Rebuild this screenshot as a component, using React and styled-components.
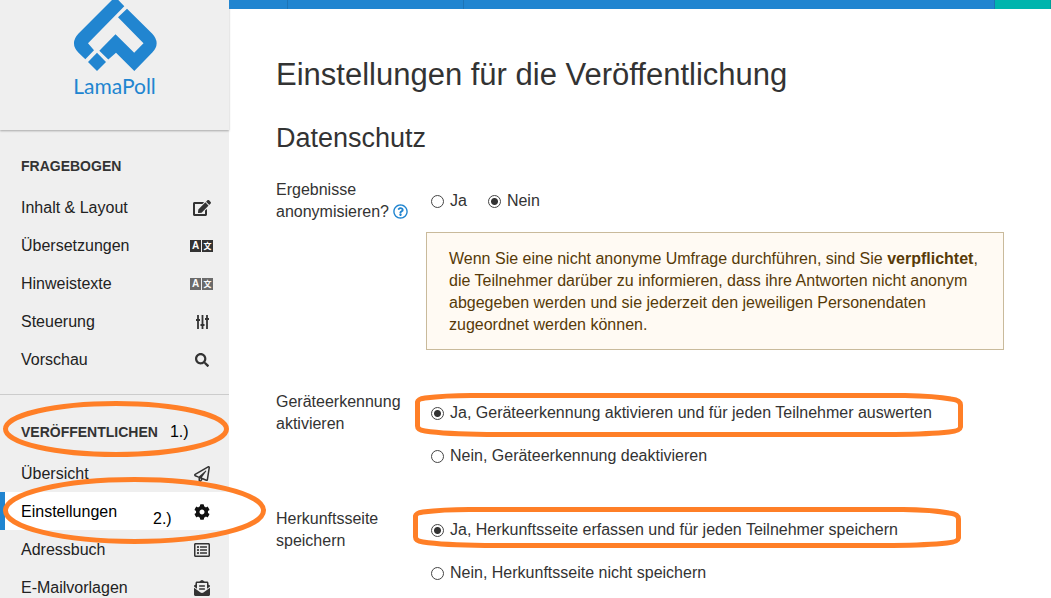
import React, { useState } from 'react';
import styled, { createGlobalStyle } from 'styled-components';
import {
  FaEdit,
  FaSearch,
  FaCog,
  FaRegPaperPlane,
  FaRegListAlt,
  FaEnvelopeOpenText,
  FaRegQuestionCircle,
} from 'react-icons/fa';

const GlobalStyle = createGlobalStyle`
  * {
    box-sizing: border-box;
  }

  html {
    scrollbar-width: none;
  }

  body {
    margin: 0;
    background: #fff;
    color: #333;
    font-family: "Liberation Sans", Arial, sans-serif;
    font-size: 16px;
    line-height: 22px;
  }
`;

const Page = styled.div`
  display: flex;
  min-height: 100vh;
`;

const Sidebar = styled.aside`
  position: relative;
  z-index: 1;
  flex: 0 0 229px;
  background: #efefef;
`;

const Brand = styled.a`
  display: flex;
  flex-direction: column;
  align-items: center;
  height: 130px;
  background: #efefef;
  box-shadow: 0 1px 2px rgba(0, 0, 0, 0.3);
  color: #2185d0;
  font-family: Lato, sans-serif;
  font-size: 21px;
  line-height: 30px;
  text-decoration: none;
`;

const MenuSection = styled.section`
  padding: 24px 0 16px;

  & + & {
    padding-top: 25px;
    border-top: 1px solid #ccc;
  }
`;

const MenuHeading = styled.h2`
  position: relative;
  display: flex;
  gap: 12px;
  margin: 0 0 10px;
  padding-left: 21px;
  font-size: 14px;
  line-height: 24px;
`;

const MenuList = styled.ul`
  margin: 0;
  padding: 0;
  list-style: none;
`;

const MenuItem = styled.li`
  position: relative;
`;

const MenuLink = styled.a`
  display: flex;
  align-items: center;
  justify-content: space-between;
  height: 38px;
  padding: 1px 15px 0 ${({ $active }) => ($active ? '16px' : '21px')};
  border-left: ${({ $active }) => ($active ? '5px solid #2185d0' : 'none')};
  background: ${({ $active }) => ($active ? '#fff' : 'transparent')};
  color: ${({ $active }) => ($active ? '#000' : '#222')};
  text-decoration: none;
`;

const MenuIcon = styled.span`
  display: flex;
  justify-content: center;
  width: 24px;
  color: ${({ $active }) => ($active ? '#111' : '#333')};
  opacity: ${({ $faded }) => ($faded ? 0.7 : 1)};
`;

const Content = styled.div`
  flex: 1;
  min-width: 0;
`;

const TopBar = styled.div`
  position: relative;
  z-index: 2;
  display: grid;
  grid-template-columns: 59px 176px 1fr 56px;
  height: 9px;
`;

const TopBarCell = styled.div`
  background: ${({ $color }) => $color || '#2185d0'};
  border-right: 1px solid rgba(0, 0, 0, 0.12);
`;

const Main = styled.main`
  padding: 46px 47px 0;
`;

const Title = styled.h1`
  margin: 0 0 26px;
  font-size: 31px;
  font-weight: 400;
  line-height: 40px;
`;

const Subtitle = styled.h2`
  margin: 0 0 24px;
  font-size: 27px;
  font-weight: 400;
  line-height: 34px;
`;

const Field = styled.div`
  display: grid;
  grid-template-columns: 150px 1fr;
  margin-bottom: 41px;
`;

const FieldLabel = styled.div`
  white-space: pre-line;
`;

const HelpButton = styled.button`
  display: inline-flex;
  margin-left: 4px;
  padding: 0;
  border: 0;
  background: none;
  color: #2185d0;
  vertical-align: -2px;
`;

const Options = styled.div`
  display: flex;
  flex-direction: ${({ $inline }) => ($inline ? 'row' : 'column')};
  align-items: flex-start;
  gap: 21px;
  padding: 11px 0 0 5px;
`;

const Option = styled.label`
  position: relative;
  display: flex;
  align-items: center;
  gap: 6px;
`;

const Radio = styled.input`
  appearance: none;
  width: 13px;
  height: 13px;
  margin: 0;
  border: 1px solid #444;
  border-radius: 50%;
  background: #fff;

  &:checked {
    background: radial-gradient(circle, #333 3px, #fff 4px);
  }
`;

const Notice = styled.p`
  margin: 20px 0 0;
  padding: 15px 22px 13px;
  border: 1px solid #c9ba9b;
  background: #fffaf3;
  color: #573a08;
`;

/* hand-drawn marker rings */
const Ring = styled.svg`
  position: absolute;
  top: ${({ $top }) => $top}px;
  left: ${({ $left }) => $left}px;
  z-index: 2;
  overflow: visible;
  pointer-events: none;
  fill: none;
  stroke: #ff7f27;
  stroke-width: 5;
  stroke-linejoin: round;
`;

const Step = styled.span`
  color: #000;
  font-size: 16px;
  font-weight: 400;
`;

const FloatingStep = styled(Step)`
  position: absolute;
  top: 16px;
  left: 153px;
`;

const Logo = () => (
  <svg width="84" height="71" viewBox="0 0 84 71" fill="currentColor" aria-hidden="true">
    <path d="M39 0H45.300L51.300 6.300L15 43.300L21 50.300L12.300 59.300L5.300 52.600Q-3.400 43.300 5.300 33.800Z" />
    <path d="M54 8.700L79.300 33.800Q88 43.300 79.300 52.600L61.300 71L43 52.700L35.300 59.500L26.300 50.700L42.500 34.300L61.200 52.700L70.500 43.300L45 17.300Z" />
    <path d="M24 52.800L33 62L24 71L15 62Z" />
  </svg>
);

const TranslateIcon = () => (
  <svg width="24" height="12" viewBox="0 0 24 12" aria-hidden="true">
    <rect width="11" height="12" fill="currentColor" />
    <rect x="12" width="11" height="12" fill="currentColor" />
    <text x="2" y="9" fontSize="10" fontWeight="700" fill="#fff">A</text>
    <text x="13.500" y="9" fontSize="8" fontWeight="700" fontFamily="Noto Sans CJK JP, sans-serif" fill="#fff">文</text>
  </svg>
);

const SlidersIcon = () => (
  <svg width="15" height="14" viewBox="0 0 15 14" fill="none" stroke="currentColor" strokeWidth="2" aria-hidden="true">
    <path d="M3 0V14M7.500 0V14M12 0V14" strokeWidth="1.800" />
    <path d="M1 5H5M5.500 10H9.500M10 4H14" />
  </svg>
);

const BoxRing = ({ left, top, height }) => {
  const h = height - 5;
  return (
    <Ring $left={left} $top={top} width="548" height={height} viewBox={`0 0 548 ${height}`}>
      <path
        d={`M2.500 9Q3 6 10 5Q30 2.500 56 2.500H490Q520 3 536 6Q545.500 7 545.500 12V${h - 5}Q545 ${h - 1} 534 ${h}Q515 ${h + 2} 480 ${h + 2.5}H72Q30 ${h + 2} 10 ${h - 1}Q2.500 ${h - 2} 2.500 ${h - 6}Z`}
      />
    </Ring>
  );
};

const EllipseRing = ({ left, top, width, height }) => (
  <Ring $left={left} $top={top} width={width} height={height}>
    <ellipse cx={width / 2} cy={height / 2} rx={width / 2 - 2.5} ry={height / 2 - 2.5} />
  </Ring>
);

const questionItems = [
  { label: 'Inhalt & Layout', icon: <FaEdit size={18} /> },
  { label: 'Übersetzungen', icon: <TranslateIcon /> },
  { label: 'Hinweistexte', icon: <TranslateIcon />, faded: true },
  { label: 'Steuerung', icon: <SlidersIcon /> },
  { label: 'Vorschau', icon: <FaSearch size={14} /> },
];

const publishItems = [
  { label: 'Übersicht', icon: <FaRegPaperPlane size={16} /> },
  { label: 'Einstellungen', icon: <FaCog size={16} />, active: true },
  { label: 'Adressbuch', icon: <FaRegListAlt size={16} /> },
  { label: 'E-Mailvorlagen', icon: <FaEnvelopeOpenText size={16} /> },
];

const Menu = ({ items }) => (
  <MenuList>
    {items.map(({ label, icon, active, faded }) => (
      <MenuItem key={label}>
        <MenuLink href="#" $active={active} aria-current={active ? 'page' : undefined}>
          {label}
          <MenuIcon $active={active} $faded={faded}>{icon}</MenuIcon>
        </MenuLink>
        {active && (
          <>
            <FloatingStep>2.)</FloatingStep>
            <EllipseRing left={3} top={-15} width={263} height={67} />
          </>
        )}
      </MenuItem>
    ))}
  </MenuList>
);

const RadioGroup = ({ name, options, inline, initial, ring }) => {
  const [selected, setSelected] = useState(initial);

  return (
    <Options $inline={inline} role="radiogroup" aria-labelledby={`${name}-label`}>
      {options.map((text, index) => (
        <Option key={text}>
          <Radio
            type="radio"
            name={name}
            checked={selected === index}
            onChange={() => setSelected(index)}
          />
          {text}
          {ring && index === 0 && <BoxRing {...ring} />}
        </Option>
      ))}
    </Options>
  );
};

const App = () => (
  <Page>
    <GlobalStyle />
    <Sidebar>
      <Brand href="#">
        <Logo />
        LamaPoll
      </Brand>
      <nav>
        <MenuSection>
          <MenuHeading>FRAGEBOGEN</MenuHeading>
          <Menu items={questionItems} />
        </MenuSection>
        <MenuSection>
          <MenuHeading>
            VERÖFFENTLICHEN
            <Step>1.)</Step>
            <EllipseRing left={3} top={-19} width={226} height={56} />
          </MenuHeading>
          <Menu items={publishItems} />
        </MenuSection>
      </nav>
    </Sidebar>
    <Content>
      <TopBar>
        <TopBarCell />
        <TopBarCell />
        <TopBarCell />
        <TopBarCell $color="#00b5ad" />
      </TopBar>
      <Main>
        <Title>Einstellungen für die Veröffentlichung</Title>
        <Subtitle>Datenschutz</Subtitle>
        <Field>
          <FieldLabel id="anonym-label">
            {'Ergebnisse\nanonymisieren?'}
            <HelpButton type="button" aria-label="Hilfe">
              <FaRegQuestionCircle size={15} />
            </HelpButton>
          </FieldLabel>
          <div>
            <RadioGroup name="anonym" inline initial={1} options={['Ja', 'Nein']} />
            <Notice>
              Wenn Sie eine nicht anonyme Umfrage durchführen, sind Sie <b>verpflichtet</b>,
              die Teilnehmer darüber zu informieren, dass ihre Antworten nicht anonym
              abgegeben werden und sie jederzeit den jeweiligen Personendaten
              zugeordnet werden können.
            </Notice>
          </div>
        </Field>
        <Field>
          <FieldLabel id="device-label">{'Geräteerkennung\naktivieren'}</FieldLabel>
          <RadioGroup
            name="device"
            initial={0}
            options={[
              'Ja, Geräteerkennung aktivieren und für jeden Teilnehmer auswerten',
              'Nein, Geräteerkennung deaktivieren',
            ]}
            ring={{ left: -16, top: -9, height: 44 }}
          />
        </Field>
        <Field>
          <FieldLabel id="referrer-label">{'Herkunftsseite\nspeichern'}</FieldLabel>
          <RadioGroup
            name="referrer"
            initial={0}
            options={[
              'Ja, Herkunftsseite erfassen und für jeden Teilnehmer speichern',
              'Nein, Herkunftsseite nicht speichern',
            ]}
            ring={{ left: -18, top: -12, height: 41 }}
          />
        </Field>
      </Main>
    </Content>
  </Page>
);

export default App;
